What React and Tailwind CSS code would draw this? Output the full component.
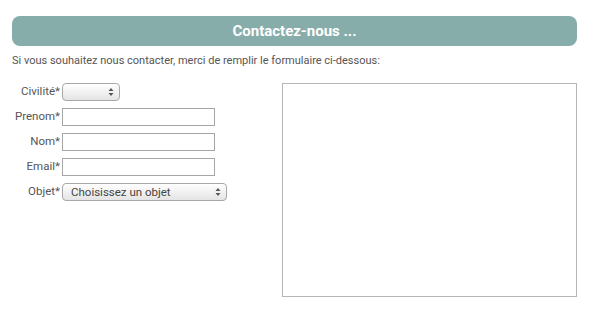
import React from "react";

function Arrows() {
  return (
    <svg width="6" height="9" viewBox="0 0 6 9" className="absolute right-[5px] top-1/2 -translate-y-1/2">
      <path d="M0.5 3.5 L3 0.5 L5.5 3.5 Z" fill="#555" />
      <path d="M0.5 5.5 L3 8.5 L5.5 5.5 Z" fill="#555" />
    </svg>
  );
}

function Select({ w, text }) {
  return (
    <div
      className={`relative h-[18px] ${w} rounded-[4px] border border-[#a8a8a8] bg-gradient-to-b from-[#ffffff] to-[#e4e4e4] text-[11.5px] leading-[16px] text-[#444] pl-[8px]`}
    >
      {text}
      <Arrows />
    </div>
  );
}

function Row({ label, children }) {
  return (
    <div className="flex items-center h-[18px]">
      <div className="w-[62px] pr-[2px] text-right text-[11.5px] text-[#555] whitespace-nowrap">{label}</div>
      {children}
    </div>
  );
}

function Input() {
  return <div className="h-[18px] w-[153px] border border-[#a6a6a6] bg-white" />;
}

export default function App() {
  return (
    <div className="w-[599px] h-[310px] bg-white font-['Roboto',sans-serif] pt-[16px]">
      <div className="ml-[12px] w-[565px] h-[30px] rounded-[8px] bg-[#87adaa] flex items-center justify-center text-white font-bold text-[15px]">
        Contactez-nous ...
      </div>
      <div className="ml-[12px] mt-[8px] text-[11px] text-[#555] leading-[14px]">
        Si vous souhaitez nous contacter, merci de remplir le formulaire ci-dessous:
      </div>
      <div className="flex mt-[15px]">
        <div className="w-[282px] flex flex-col gap-[7px]">
          <Row label="Civilité*">
            <Select w="w-[58px]" text="" />
          </Row>
          <Row label="Prenom*">
            <Input />
          </Row>
          <Row label="Nom*">
            <Input />
          </Row>
          <Row label="Email*">
            <Input />
          </Row>
          <Row label="Objet*">
            <Select w="w-[165px]" text="Choisissez un objet" />
          </Row>
        </div>
        <div className="w-[295px] h-[214px] border border-[#b5b5b5] bg-white" />
      </div>
    </div>
  );
}
